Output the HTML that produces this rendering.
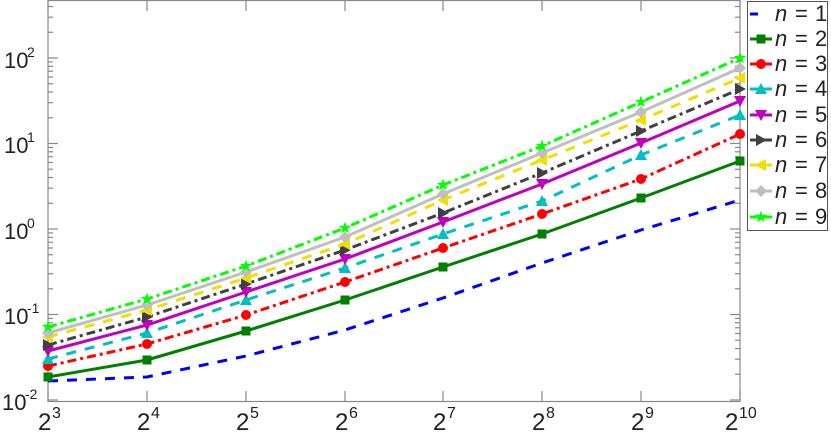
<!DOCTYPE html>
<html><head><meta charset="utf-8"><style>
html,body{margin:0;padding:0;background:#fff;width:831px;height:432px;overflow:hidden}
svg{display:block}
text{font-family:"Liberation Sans",sans-serif;fill:#222}
.lg{font-family:"Liberation Serif",serif;font-size:22px;fill:#111}
</style></head><body>
<svg id="s" width="831" height="432" xmlns="http://www.w3.org/2000/svg">
<g id="axes" stroke="#888" stroke-width="1.2" fill="none">
<rect x="48" y="0.5" width="692" height="401"/>
</g>
<g font-size="22">
<text x="4" y="68">10</text><text x="27" y="57" font-size="14">2</text>
<text x="4" y="153">10</text><text x="27" y="142" font-size="14">1</text>
<text x="4" y="239">10</text><text x="27" y="228" font-size="14">0</text>
<text x="4" y="324">10</text><text x="27" y="313" font-size="14">-1</text>
<text x="2" y="410">10</text><text x="25" y="399" font-size="14">-2</text>
</g>
<g font-size="24">
<text x="38" y="430">2</text><text x="52" y="418" font-size="16">3</text>
<text x="137" y="430">2</text><text x="151" y="418" font-size="16">4</text>
<text x="236" y="430">2</text><text x="250" y="418" font-size="16">5</text>
<text x="335" y="430">2</text><text x="349" y="418" font-size="16">6</text>
<text x="433" y="430">2</text><text x="447" y="418" font-size="16">7</text>
<text x="532" y="430">2</text><text x="546" y="418" font-size="16">8</text>
<text x="631" y="430">2</text><text x="645" y="418" font-size="16">9</text>
<text x="725" y="430">2</text><text x="739" y="418" font-size="16">10</text>
</g>
<g id="data"></g>
<rect x="747.5" y="1.5" width="80" height="229" fill="#fff" stroke="#555" stroke-width="1"/>
<g id="leg"></g>
<g class="lg">
<text y="21"><tspan x="775" font-style="italic">n</tspan><tspan x="795">=</tspan><tspan x="815">1</tspan></text>
<text y="46"><tspan x="775" font-style="italic">n</tspan><tspan x="795">=</tspan><tspan x="815">2</tspan></text>
<text y="71"><tspan x="775" font-style="italic">n</tspan><tspan x="795">=</tspan><tspan x="815">3</tspan></text>
<text y="96"><tspan x="775" font-style="italic">n</tspan><tspan x="795">=</tspan><tspan x="815">4</tspan></text>
<text y="122"><tspan x="775" font-style="italic">n</tspan><tspan x="795">=</tspan><tspan x="815">5</tspan></text>
<text y="147"><tspan x="775" font-style="italic">n</tspan><tspan x="795">=</tspan><tspan x="815">6</tspan></text>
<text y="172"><tspan x="775" font-style="italic">n</tspan><tspan x="795">=</tspan><tspan x="815">7</tspan></text>
<text y="198"><tspan x="775" font-style="italic">n</tspan><tspan x="795">=</tspan><tspan x="815">8</tspan></text>
<text y="224"><tspan x="775" font-style="italic">n</tspan><tspan x="795">=</tspan><tspan x="815">9</tspan></text>
</g>
</svg>
<script>
var NS="http://www.w3.org/2000/svg";
function el(p,t,a){var e=document.createElementNS(NS,t);for(var k in a)e.setAttribute(k,a[k]);p.appendChild(e);return e;}
var ax=document.getElementById('axes');
var X=[48,147,246,345,443,542,641,740];
for(var d=-2;d<=2;d++){var y0=400-(d+2)*85.5;
 for(var m=1;m<10;m++){var y=y0-Math.log10(m)*85.5;if(y<1)continue;var L=m==1?10:5;
  el(ax,'line',{x1:48,y1:y,x2:48+L,y2:y});el(ax,'line',{x1:740,y1:y,x2:740-L,y2:y});}}
X.forEach(function(x){el(ax,'line',{x1:x,y1:401,x2:x,y2:391});el(ax,'line',{x1:x,y1:1,x2:x,y2:11});});
var S=[
['#0000ff','10,9','none',[381,377,356,330,298,263,230,200]],
['#007f00','','sq',[377,360,331,300,267,234,198,161]],
['#ff0000','9,4,3,4','ci',[366,344,315,282,248,214,179,134]],
['#00bfbf','10,9','tu',[359,333,300,268,234,201,155,115]],
['#bf00bf','','td',[351,325,292,259,222,184,143,101]],
['#404040','9,4,3,4','tr',[345,317,284,250,213,173,131,89]],
['#f0e000','10,9','tl',[337,310,278,244,200,160,120,78]],
['#bfbfbf','','di',[333,305,272,237,194,153,112,68]],
['#00ff00','9,4,3,4','st',[327,299,266,228,185,146,102,58]]];
var g=document.getElementById('data'),lg=document.getElementById('leg');
function mk(p,t,x,y,c){
 if(t=='sq')el(p,'rect',{x:x-4.5,y:y-4.5,width:9,height:9,fill:c});
 else if(t=='ci')el(p,'circle',{cx:x,cy:y,r:5,fill:c});
 else if(t=='tu')el(p,'polygon',{points:(x)+','+(y-6)+' '+(x+6)+','+(y+5)+' '+(x-6)+','+(y+5),fill:c});
 else if(t=='td')el(p,'polygon',{points:(x)+','+(y+6)+' '+(x+6)+','+(y-5)+' '+(x-6)+','+(y-5),fill:c});
 else if(t=='tr')el(p,'polygon',{points:(x+6)+','+y+' '+(x-5)+','+(y-6)+' '+(x-5)+','+(y+6),fill:c});
 else if(t=='tl')el(p,'polygon',{points:(x-6)+','+y+' '+(x+5)+','+(y-6)+' '+(x+5)+','+(y+6),fill:c});
 else if(t=='di')el(p,'polygon',{points:x+','+(y-6)+' '+(x+6)+','+y+' '+x+','+(y+6)+' '+(x-6)+','+y,fill:c});
 else if(t=='st'){var pts=[];for(var i=0;i<10;i++){var r=i%2?2.6:6.5,a=-Math.PI/2+i*Math.PI/5;pts.push((x+r*Math.cos(a)).toFixed(1)+','+(y+r*Math.sin(a)).toFixed(1));}el(p,'polygon',{points:pts.join(' '),fill:c});}
}
var LY=[14,39,64,89,115,140,165,191,217];
S.forEach(function(s,i){
 var pts=X.map(function(x,j){return x+','+s[3][j];}).join(' ');
 var a={points:pts,fill:'none',stroke:s[0],'stroke-width':3};if(s[1])a['stroke-dasharray']=s[1];
 el(g,'polyline',a);
 if(s[2]!='none')X.forEach(function(x,j){mk(g,s[2],x,s[3][j],s[0]);});
 var la={x1:750,y1:LY[i],x2:772,y2:LY[i],stroke:s[0],'stroke-width':3};
 if(i==0){la.x1=750;la.x2=758;}
 el(lg,'line',la);
 if(s[2]!='none')mk(lg,s[2],761,LY[i],s[0]);
});
</script>
</body></html>
